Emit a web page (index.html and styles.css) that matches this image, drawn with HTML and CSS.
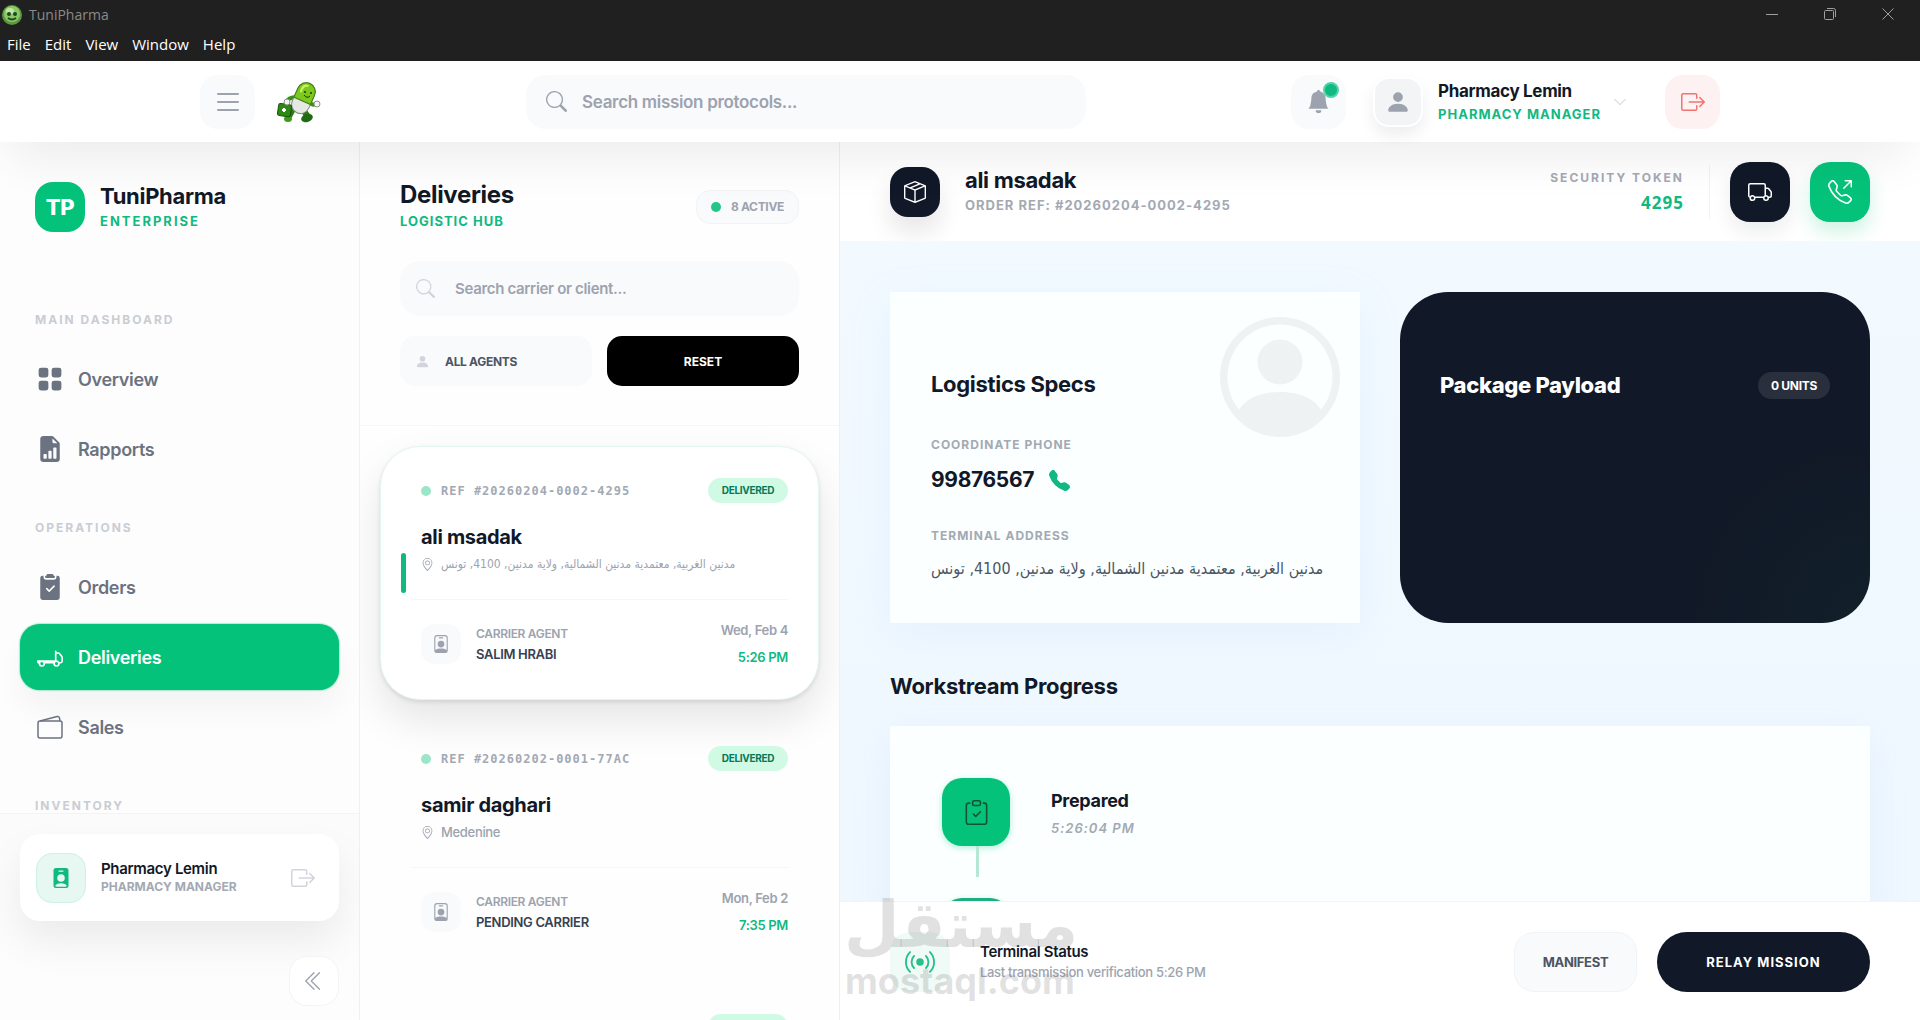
FILE: index.html
```html
<!DOCTYPE html>
<html lang="en">
<head>
  <meta charset="UTF-8" />
  <meta name="viewport" content="width=device-width, initial-scale=1.0" />
  <title>TuniPharma</title>
  <link rel="stylesheet" href="styles.css">
</head>
<body>
  <!-- Icon set -->
  <svg class="sprite" aria-hidden="true">
    <symbol id="i-list" viewBox="0 0 16 16"><path d="M2.5 12a.5.5 0 0 1 .5-.5h10a.5.5 0 0 1 0 1H3a.5.5 0 0 1-.5-.5m0-4a.5.5 0 0 1 .5-.5h10a.5.5 0 0 1 0 1H3a.5.5 0 0 1-.5-.5m0-4a.5.5 0 0 1 .5-.5h10a.5.5 0 0 1 0 1H3a.5.5 0 0 1-.5-.5"/></symbol>
    <symbol id="i-search" viewBox="0 0 16 16"><path d="M11.742 10.344a6.5 6.5 0 1 0-1.397 1.398h-.001q.044.06.098.115l3.85 3.85a1 1 0 0 0 1.415-1.414l-3.85-3.85a1 1 0 0 0-.115-.1zM12 6.5a5.5 5.5 0 1 1-11 0 5.5 5.5 0 0 1 11 0"/></symbol>
    <symbol id="i-bell" viewBox="0 0 16 16"><path d="M8 16a2 2 0 0 0 2-2H6a2 2 0 0 0 2 2m.995-14.901a1 1 0 1 0-1.99 0A5 5 0 0 0 3 6c0 1.098-.5 6-2 7h14c-1.5-1-2-5.902-2-7 0-2.42-1.72-4.44-4.005-4.901"/></symbol>
    <symbol id="i-person" viewBox="0 0 16 16"><path d="M3 14s-1 0-1-1 1-4 6-4 6 3 6 4-1 1-1 1zm5-6a3 3 0 1 0 0-6 3 3 0 0 0 0 6"/></symbol>
    <symbol id="i-chevron" viewBox="0 0 16 16"><path d="M1.646 4.646a.5.5 0 0 1 .708 0L8 10.293l5.646-5.647a.5.5 0 0 1 .708.708l-6 6a.5.5 0 0 1-.708 0l-6-6a.5.5 0 0 1 0-.708"/></symbol>
    <symbol id="i-exit" viewBox="0 0 16 16"><path d="M10 12.5a.5.5 0 0 1-.5.5h-8a.5.5 0 0 1-.5-.5v-9a.5.5 0 0 1 .5-.5h8a.5.5 0 0 1 .5.5v2a.5.5 0 0 0 1 0v-2A1.5 1.5 0 0 0 9.5 2h-8A1.5 1.5 0 0 0 0 3.5v9A1.5 1.5 0 0 0 1.5 14h8a1.5 1.5 0 0 0 1.5-1.5v-2a.5.5 0 0 0-1 0z"/><path d="M15.854 8.354a.5.5 0 0 0 0-.708l-3-3a.5.5 0 0 0-.708.708L14.293 7.5H5.5a.5.5 0 0 0 0 1h8.793l-2.147 2.146a.5.5 0 0 0 .708.708z"/></symbol>
    <symbol id="i-grid" viewBox="0 0 16 16"><path d="M1 2.5A1.5 1.5 0 0 1 2.5 1h3A1.5 1.5 0 0 1 7 2.500v3A1.500 1.500 0 0 1 5.500 7h-3A1.500 1.500 0 0 1 1 5.500zm8 0A1.500 1.500 0 0 1 10.500 1h3A1.500 1.500 0 0 1 15 2.500v3A1.500 1.500 0 0 1 13.500 7h-3A1.500 1.500 0 0 1 9 5.500zm-8 8A1.500 1.500 0 0 1 2.500 9h3A1.500 1.500 0 0 1 7 10.500v3A1.500 1.500 0 0 1 5.500 15h-3A1.500 1.500 0 0 1 1 13.500zm8 0A1.500 1.500 0 0 1 10.500 9h3a1.500 1.500 0 0 1 1.500 1.500v3a1.500 1.500 0 0 1-1.500 1.500h-3A1.500 1.500 0 0 1 9 13.500z"/></symbol>
    <symbol id="i-report" viewBox="0 0 16 16"><path d="M9.293 0H4a2 2 0 0 0-2 2v12a2 2 0 0 0 2 2h8a2 2 0 0 0 2-2V4.707A1 1 0 0 0 13.707 4L10 .293A1 1 0 0 0 9.293 0M9.500 3.500v-2l3 3h-2a1 1 0 0 1-1-1m.5 10v-6a.5.5 0 0 1 .5-.5h1a.5.5 0 0 1 .5.5v6a.5.5 0 0 1-.5.5h-1a.5.5 0 0 1-.5-.5m-2.500.5a.5.5 0 0 1-.5-.5v-4a.5.5 0 0 1 .5-.5h1a.5.5 0 0 1 .5.5v4a.5.5 0 0 1-.5.5zm-3 0a.5.5 0 0 1-.5-.5v-2a.5.5 0 0 1 .5-.5h1a.5.5 0 0 1 .5.5v2a.5.5 0 0 1-.5.5z"/></symbol>
    <symbol id="i-orders" viewBox="0 0 16 16"><path d="M10 .5a.5.5 0 0 0-.5-.5h-3a.5.5 0 0 0-.5.5.5.5 0 0 1-.5.5.5.5 0 0 0-.5.5V2a.5.5 0 0 0 .5.5h5A.5.5 0 0 0 11 2v-.5a.5.5 0 0 0-.5-.5.5.5 0 0 1-.5-.5"/><path d="M4.085 1H3.500A1.500 1.500 0 0 0 2 2.500v12A1.500 1.500 0 0 0 3.500 16h9a1.500 1.500 0 0 0 1.500-1.500v-12A1.500 1.500 0 0 0 12.500 1h-.585q.084.236.085.5V2a1.500 1.500 0 0 1-1.500 1.500h-5A1.500 1.500 0 0 1 4 2v-.5q.001-.264.085-.5m6.769 6.854-3 3a.5.5 0 0 1-.708 0l-1.500-1.500a.5.5 0 1 1 .708-.708L7.500 9.793l2.646-2.647a.5.5 0 0 1 .708.708"/></symbol>
    <symbol id="i-flatbed" viewBox="0 0 16 16"><path d="M11.500 4a.5.5 0 0 1 .5.5V5h1.020a1.500 1.500 0 0 1 1.170.563l1.481 1.850a1.500 1.500 0 0 1 .329.938V10.500a1.500 1.500 0 0 1-1.500 1.500H14a2 2 0 1 1-4 0H5a2 2 0 1 1-4 0 1 1 0 0 1-1-1v-1h11V4.500a.5.5 0 0 1 .5-.5M3 11a1 1 0 1 0 0 2 1 1 0 0 0 0-2m9 0a1 1 0 1 0 0 2 1 1 0 0 0 0-2m1.732 0h.768a.5.5 0 0 0 .5-.5V8.350a.5.5 0 0 0-.11-.312l-1.480-1.850A.5.5 0 0 0 13.020 6H12v4a2 2 0 0 1 1.732 1"/></symbol>
    <symbol id="i-wallet" viewBox="0 0 26 26" fill="none" stroke="currentColor" stroke-width="1.5" stroke-linejoin="round"><rect x="1" y="7" width="24" height="17" rx="2"/><path d="M3 7 20 2.500q2-.5 2.500 1.500l.5 3"/></symbol>
    <symbol id="i-badge-fill" viewBox="0 0 16 16"><path fill-rule="evenodd" d="M4 0h8a2 2 0 0 1 2 2v12a2 2 0 0 1-2 2H4a2 2 0 0 1-2-2V2a2 2 0 0 1 2-2m2.500 2a.5.5 0 0 0 0 1h3a.5.5 0 0 0 0-1zM8 5a3 3 0 1 0 0 6 3 3 0 0 0 0-6M3.500 13.800V14a1 1 0 0 0 1 1h7a1 1 0 0 0 1-1v-.2C11.500 12.800 10 12.200 8 12.200s-3.500.6-4.500 1.600"/></symbol>
    <symbol id="i-badge" viewBox="0 0 16 16"><path d="M6.500 2a.5.5 0 0 0 0 1h3a.5.5 0 0 0 0-1zM11 8a3 3 0 1 1-6 0 3 3 0 0 1 6 0"/><path d="M4.500 0A2.500 2.500 0 0 0 2 2.500V14a2 2 0 0 0 2 2h8a2 2 0 0 0 2-2V2.500A2.500 2.500 0 0 0 11.500 0zM3 2.500A1.500 1.500 0 0 1 4.500 1h7A1.500 1.500 0 0 1 13 2.500v10.795a4.200 4.200 0 0 0-.776-.492C11.392 12.387 10.063 12 8 12s-3.392.387-4.224.803a4.200 4.200 0 0 0-.776.492z"/></symbol>
    <symbol id="i-collapse" viewBox="0 0 16 16" fill="none" stroke="currentColor" stroke-linecap="round" stroke-linejoin="round"><path d="M8 2 2 8l6 6M12 2 6 8l6 6"/></symbol>
    <symbol id="i-geo" viewBox="0 0 16 16"><path d="M12.166 8.940c-.524 1.062-1.234 2.120-1.960 3.070A32 32 0 0 1 8 14.580a32 32 0 0 1-2.206-2.570c-.726-.95-1.436-2.008-1.960-3.070C3.304 7.867 3 6.862 3 6a5 5 0 0 1 10 0c0 .862-.305 1.867-.834 2.940M8 16s6-5.686 6-10A6 6 0 0 0 2 6c0 4.314 6 10 6 10"/><path d="M8 8a2 2 0 1 1 0-4 2 2 0 0 1 0 4m0 1a3 3 0 1 0 0-6 3 3 0 0 0 0 6"/></symbol>
    <symbol id="i-box" viewBox="0 0 16 16"><path d="M8.186 1.113a.5.5 0 0 0-.372 0L1.846 3.500l2.404.961L10.404 2zm3.564 1.426L5.596 5 8 5.961 14.154 3.500zm3.250 1.700-6.500 2.600v7.922l6.500-2.600V4.240zM7.500 14.762V6.838L1 4.239v7.923zM7.443.184a1.500 1.500 0 0 1 1.114 0l7.129 2.852A.5.5 0 0 1 16 3.500v8.662a1 1 0 0 1-.629.928l-7.185 2.874a.5.5 0 0 1-.372 0L.630 13.090a1 1 0 0 1-.630-.928V3.500a.5.5 0 0 1 .314-.464z"/></symbol>
    <symbol id="i-truck" viewBox="0 0 16 16"><path d="M0 3.500A1.500 1.500 0 0 1 1.500 2h9A1.500 1.500 0 0 1 12 3.500V5h1.020a1.500 1.500 0 0 1 1.170.563l1.481 1.850a1.500 1.500 0 0 1 .329.938V10.500a1.500 1.500 0 0 1-1.500 1.500H14a2 2 0 1 1-4 0H5a2 2 0 1 1-3.998-.085A1.500 1.500 0 0 1 0 10.500zm1.294 7.456A2 2 0 0 1 4.732 11h5.536a2 2 0 0 1 .732-.732V3.500a.5.5 0 0 0-.5-.5h-9a.5.5 0 0 0-.5.5v7a.5.5 0 0 0 .294.456M12 10a2 2 0 0 1 1.732 1h.768a.5.5 0 0 0 .5-.5V8.350a.5.5 0 0 0-.11-.312l-1.480-1.850A.5.5 0 0 0 13.020 6H12zm-9 1a1 1 0 1 0 0 2 1 1 0 0 0 0-2m9 0a1 1 0 1 0 0 2 1 1 0 0 0 0-2"/></symbol>
    <symbol id="i-call-out" viewBox="0 0 16 16"><path d="M3.654 1.328a.678.678 0 0 0-1.015-.063L1.605 2.300c-.483.484-.661 1.169-.45 1.770a17.600 17.600 0 0 0 4.168 6.608 17.600 17.600 0 0 0 6.608 4.168c.601.211 1.286.033 1.770-.450l1.034-1.034a.678.678 0 0 0-.063-1.015l-2.307-1.794a.680.680 0 0 0-.580-.122l-2.190.547a1.750 1.750 0 0 1-1.657-.459L5.482 8.062a1.750 1.750 0 0 1-.460-1.657l.548-2.190a.680.680 0 0 0-.122-.580zM1.884.511a1.745 1.745 0 0 1 2.612.163L6.290 2.980c.329.423.445.974.315 1.494l-.547 2.190a.680.680 0 0 0 .178.643l2.457 2.457a.680.680 0 0 0 .644.178l2.189-.547a1.750 1.750 0 0 1 1.494.315l2.306 1.794c.829.645.905 1.870.163 2.611l-1.034 1.034c-.740.740-1.846 1.065-2.877.702a18.600 18.600 0 0 1-7.010-4.420 18.600 18.600 0 0 1-4.420-7.009c-.362-1.030-.037-2.137.703-2.877zM11 .5a.5.5 0 0 1 .5-.5h4a.5.5 0 0 1 .5.5v4a.5.5 0 0 1-1 0V1.707l-4.146 4.147a.5.5 0 0 1-.708-.708L14.293 1H11.500a.5.5 0 0 1-.5-.5"/></symbol>
    <symbol id="i-phone" viewBox="0 0 16 16"><path d="M1.885.511a1.745 1.745 0 0 1 2.610.163L6.290 2.980c.329.423.445.974.315 1.494l-.547 2.190a.680.680 0 0 0 .178.643l2.457 2.457a.680.680 0 0 0 .644.178l2.189-.547a1.750 1.750 0 0 1 1.494.315l2.306 1.794c.829.645.905 1.870.163 2.611l-1.034 1.034c-.740.740-1.846 1.065-2.877.702a18.600 18.600 0 0 1-7.010-4.420 18.600 18.600 0 0 1-4.420-7.009c-.362-1.030-.037-2.137.703-2.877z"/></symbol>
    <symbol id="i-user-circle" viewBox="0 0 16 16"><path d="M11 6a3 3 0 1 1-6 0 3 3 0 0 1 6 0"/><path fill-rule="evenodd" d="M0 8a8 8 0 1 1 16 0A8 8 0 0 1 0 8m8-7a7 7 0 0 0-5.468 11.370C3.242 11.226 4.805 10 8 10s4.757 1.225 5.468 2.370A7 7 0 0 0 8 1"/></symbol>
    <symbol id="i-clipboard" viewBox="0 0 16 16"><path fill-rule="evenodd" d="M10.854 7.146a.5.5 0 0 1 0 .708l-3 3a.5.5 0 0 1-.708 0l-1.500-1.500a.5.5 0 1 1 .708-.708L7.500 9.793l2.646-2.647a.5.5 0 0 1 .708 0"/><path d="M4 1.500H3a2 2 0 0 0-2 2V14a2 2 0 0 0 2 2h10a2 2 0 0 0 2-2V3.500a2 2 0 0 0-2-2h-1v1h1a1 1 0 0 1 1 1V14a1 1 0 0 1-1 1H3a1 1 0 0 1-1-1V3.500a1 1 0 0 1 1-1h1z"/><path d="M9.500 1a.5.5 0 0 1 .5.5v1a.5.5 0 0 1-.5.5h-3a.5.5 0 0 1-.5-.5v-1a.5.5 0 0 1 .5-.5zm-3-1A1.500 1.500 0 0 0 5 1.500v1A1.500 1.500 0 0 0 6.500 4h3A1.500 1.500 0 0 0 11 2.500v-1A1.500 1.500 0 0 0 9.500 0z"/></symbol>
    <symbol id="i-broadcast" viewBox="0 0 16 16"><path d="M3.050 3.050a7 7 0 0 0 0 9.900.5.5 0 0 1-.707.707 8 8 0 0 1 0-11.314.5.5 0 0 1 .707.707m2.122 2.122a4 4 0 0 0 0 5.656.5.5 0 1 1-.708.708 5 5 0 0 1 0-7.072.5.5 0 0 1 .708.708m5.656-.708a.5.5 0 0 1 .708 0 5 5 0 0 1 0 7.072.5.5 0 1 1-.708-.708 4 4 0 0 0 0-5.656.5.5 0 0 1 0-.708m2.122-2.120a.5.5 0 0 1 .707 0 8 8 0 0 1 0 11.313.5.5 0 0 1-.707-.707 7 7 0 0 0 0-9.900.5.5 0 0 1 0-.707zM10 8a2 2 0 1 1-4 0 2 2 0 0 1 4 0"/></symbol>
  </svg>

  <!-- Window frame -->
  <div class="window-bar">
    <div class="title-row">
      <svg class="app-icon" viewBox="0 0 20 20"><ellipse cx="10" cy="10" rx="10" ry="10" fill="#5a9a3c"/><ellipse cx="10" cy="9" rx="8" ry="8" fill="#8cc868"/><ellipse cx="8" cy="6" rx="4" ry="3" fill="#c3e6a6"/><circle cx="7" cy="9" r="2" fill="#1c4a1c"/><circle cx="13" cy="9" r="2" fill="#1c4a1c"/><path d="M6 13q4 3 8 0" stroke="#1c4a1c" stroke-width="2" fill="none"/></svg>
      <span class="app-name">TuniPharma</span>
      <div class="window-controls">
        <button aria-label="Minimize"><svg viewBox="0 0 12 12"><path d="M0 6.500h12"/></svg></button>
        <button aria-label="Restore"><svg viewBox="0 0 12 12"><rect x=".5" y="2.500" width="9" height="9" rx="1"/><path d="M3 .5h6.500a2 2 0 0 1 2 2V9"/></svg></button>
        <button aria-label="Close"><svg viewBox="0 0 12 12"><path d="m.5.5 11 11m0-11-11 11"/></svg></button>
      </div>
    </div>
    <div class="menu-row">
      <button>File</button>
      <button>Edit</button>
      <button>View</button>
      <button>Window</button>
      <button>Help</button>
    </div>
  </div>

  <header class="topbar">
    <div class="topbar-inner">
      <div class="topbar-left">
        <button class="square-btn" aria-label="Menu"><svg class="icon icon-menu"><use href="#i-list"/></svg></button>
        <svg class="mascot" viewBox="0 0 44 42">
          <path d="M16 28l-5 9M27 30l4 6" stroke="#2c7a10" stroke-width="6" stroke-linecap="round"/>
          <ellipse cx="11" cy="38" rx="4" ry="3" fill="#3f9a1a"/>
          <ellipse cx="30" cy="37" rx="6" ry="4" fill="#1f6a12" transform="rotate(-20 30 37)"/>
          <path d="M20 16q-9 0-11 6M31 20q4 5 7 3" stroke="#3a8f18" stroke-width="4" fill="none" stroke-linecap="round"/>
          <g transform="rotate(24 26 18)">
            <rect x="17" y="1" width="18" height="32" rx="9" fill="#e6e8e4" stroke="#7d8a78"/>
            <path d="M17 20V10a9 9 0 0 1 18 0v10z" fill="#7cc81c" stroke="#3c7c10"/>
            <path d="M21 12V9a5 5 0 0 1 4-5" stroke="#c9f06c" stroke-width="2" fill="none" stroke-linecap="round"/>
          </g>
          <circle cx="28" cy="11" r="1" fill="#123a08"/><circle cx="34" cy="12" r="1" fill="#123a08"/>
          <path d="M27 14q3 4 6 1" stroke="#123a08" fill="none"/>
          <rect x="1" y="23" width="13" height="12" rx="2" fill="#2e8a14" stroke="#185408" transform="rotate(8 7 29)"/>
          <path d="M7 27v4M5 29h4" stroke="#fff" stroke-width="2"/>
          <circle cx="10" cy="21" r="3" fill="#f4f4f4" stroke="#8a9484"/><circle cx="40" cy="23" r="3" fill="#f4f4f4" stroke="#8a9484"/>
        </svg>
      </div>
      <label class="top-search">
        <svg class="icon"><use href="#i-search"/></svg>
        <input type="text" placeholder="Search mission protocols..." aria-label="Search mission protocols" />
      </label>
      <div class="topbar-right">
        <button class="square-btn bell" aria-label="Notifications"><svg class="icon icon-bell"><use href="#i-bell"/></svg><span class="bell-dot"></span></button>
        <button class="profile">
          <span class="profile-pic"><svg class="icon"><use href="#i-person"/></svg></span>
          <span class="profile-text">
            <strong>Pharmacy Lemin</strong>
            <small>PHARMACY MANAGER</small>
          </span>
          <svg class="icon icon-chevron"><use href="#i-chevron"/></svg>
        </button>
        <button class="square-btn exit" aria-label="Log out"><svg class="icon"><use href="#i-exit"/></svg></button>
      </div>
    </div>
  </header>

  <div class="layout">
    <aside class="sidebar">
      <div class="brand">
        <span class="brand-logo">TP</span>
        <div>
          <div class="brand-name">TuniPharma</div>
          <div class="brand-sub">ENTERPRISE</div>
        </div>
      </div>
      <nav class="side-nav">
        <section>
          <h2>MAIN DASHBOARD</h2>
          <a href="#"><svg class="icon"><use href="#i-grid"/></svg>Overview</a>
          <a href="#"><svg class="icon"><use href="#i-report"/></svg>Rapports</a>
        </section>
        <section>
          <h2>OPERATIONS</h2>
          <a href="#"><svg class="icon"><use href="#i-orders"/></svg>Orders</a>
          <a href="#" class="active"><svg class="icon"><use href="#i-flatbed"/></svg>Deliveries</a>
          <a href="#"><svg class="icon"><use href="#i-wallet"/></svg>Sales</a>
        </section>
        <section>
          <h2>INVENTORY</h2>
        </section>
      </nav>
      <div class="side-footer">
        <div class="user-card">
          <span class="user-pic"><svg class="icon"><use href="#i-badge-fill"/></svg></span>
          <div class="user-text">
            <strong>Pharmacy Lemin</strong>
            <small>PHARMACY MANAGER</small>
          </div>
          <button class="user-exit" aria-label="Log out"><svg class="icon"><use href="#i-exit"/></svg></button>
        </div>
        <button class="collapse" aria-label="Collapse sidebar"><svg class="icon"><use href="#i-collapse"/></svg></button>
      </div>
    </aside>

    <section class="hub">
      <div class="hub-head">
        <div class="hub-title">
          <div>
            <h1>Deliveries</h1>
            <p>LOGISTIC HUB</p>
          </div>
          <span class="active-count"><i class="dot"></i>8 ACTIVE</span>
        </div>
        <label class="hub-search">
          <svg class="icon"><use href="#i-search"/></svg>
          <input type="text" placeholder="Search carrier or client..." aria-label="Search carrier or client" />
        </label>
        <div class="hub-filters">
          <label class="agent-filter">
            <svg class="icon"><use href="#i-person"/></svg>
            <select aria-label="Agent"><option>ALL AGENTS</option></select>
          </label>
          <button class="reset">RESET</button>
        </div>
      </div>
      <div class="hub-list">
        <article class="delivery selected">
          <div class="delivery-top"><i class="dot"></i><span class="ref">REF #20260204-0002-4295</span><span class="state">DELIVERED</span></div>
          <h3>ali msadak</h3>
          <p class="place"><svg class="icon"><use href="#i-geo"/></svg><span class="place-text" lang="ar">مدنين الغربية, معتمدية مدنين الشمالية, ولاية مدنين, 4100, تونس</span></p>
          <div class="delivery-foot">
            <span class="agent-pic"><svg class="icon"><use href="#i-badge"/></svg></span>
            <div class="agent"><small>CARRIER AGENT</small><strong>SALIM HRABI</strong></div>
            <div class="when"><span>Wed, Feb 4</span><strong>5:26 PM</strong></div>
          </div>
        </article>
        <article class="delivery">
          <div class="delivery-top"><i class="dot"></i><span class="ref">REF #20260202-0001-77AC</span><span class="state">DELIVERED</span></div>
          <h3>samir daghari</h3>
          <p class="place"><svg class="icon"><use href="#i-geo"/></svg><span class="place-text">Medenine</span></p>
          <div class="delivery-foot">
            <span class="agent-pic"><svg class="icon"><use href="#i-badge"/></svg></span>
            <div class="agent"><small>CARRIER AGENT</small><strong>PENDING CARRIER</strong></div>
            <div class="when"><span>Mon, Feb 2</span><strong>7:35 PM</strong></div>
          </div>
        </article>
        <article class="delivery">
          <div class="delivery-top"><span class="state"></span></div>
        </article>
      </div>
    </section>

    <main class="detail">
      <div class="detail-head">
        <span class="order-pic"><svg class="icon"><use href="#i-box"/></svg></span>
        <div class="order-name">
          <h2>ali msadak</h2>
          <p>ORDER REF: #20260204-0002-4295</p>
        </div>
        <div class="token">
          <span>SECURITY TOKEN</span>
          <strong>4295</strong>
        </div>
        <button class="round-btn dark" aria-label="Track"><svg class="icon"><use href="#i-truck"/></svg></button>
        <button class="round-btn green" aria-label="Call"><svg class="icon"><use href="#i-call-out"/></svg></button>
      </div>

      <div class="detail-body">
        <div class="detail-grid">
          <section class="specs">
            <svg class="specs-mark"><use href="#i-user-circle"/></svg>
            <h2>Logistics Specs</h2>
            <h4>COORDINATE PHONE</h4>
            <p class="phone">99876567 <svg class="icon"><use href="#i-phone"/></svg></p>
            <h4>TERMINAL ADDRESS</h4>
            <p class="address" lang="ar">مدنين الغربية, معتمدية مدنين الشمالية, ولاية مدنين, 4100, تونس</p>
          </section>
          <section class="payload">
            <h2>Package Payload</h2>
            <span class="units">0 UNITS</span>
          </section>
        </div>
        <h2 class="progress-title">Workstream Progress</h2>
        <section class="progress">
          <div class="step">
            <div class="step-icon"><svg class="icon"><use href="#i-clipboard"/></svg></div>
            <div class="step-text"><strong>Prepared</strong><em>5:26:04 PM</em></div>
          </div>
          <div class="step">
            <div class="step-icon next"></div>
          </div>
        </section>
      </div>

      <footer class="detail-foot">
        <span class="signal"><svg class="icon"><use href="#i-broadcast"/></svg></span>
        <div class="signal-text">
          <strong>Terminal Status</strong>
          <small>Last transmission verification 5:26 PM</small>
        </div>
        <button class="manifest">MANIFEST</button>
        <button class="relay">RELAY MISSION</button>
      </footer>

      <!-- Watermark -->
      <div class="watermark" aria-hidden="true">
        <span class="watermark-ar" lang="ar">مستقل</span>
        <span class="watermark-en">mostaql.com</span>
      </div>
    </main>
  </div>
</body>
</html>
```

FILE: styles.css
```css
* {
  box-sizing: border-box;
}
body {
  margin: 0;
  height: 100vh;
  display: flex;
  flex-direction: column;
  overflow: hidden;
  font-family: Inter, "DejaVu Sans", sans-serif;
  letter-spacing: -0.02em;
  background: #fdfdfd;
  color: #111827;
}
h1, h2, h3, h4, p {
  margin: 0;
}
button, input, select {
  font: inherit;
  letter-spacing: inherit;
  color: inherit;
  border: none;
  background: none;
  padding: 0;
}
button {
  cursor: pointer;
}
a {
  text-decoration: none;
}
.sprite {
  position: absolute;
  width: 0;
  height: 0;
}
.icon {
  width: 22px;
  height: 22px;
  fill: currentColor;
  flex-shrink: 0;
}
.dot {
  width: 10px;
  height: 10px;
  border-radius: 50%;
  background: #22c689;
}

/* window frame */
.window-bar {
  background: #202020;
  color: #fff;
  font-family: "Open Sans", sans-serif;
  letter-spacing: normal;
  height: 61px;
  flex-shrink: 0;
}
.title-row {
  display: flex;
  align-items: center;
  height: 29px;
  padding-left: 2px;
  font-size: 14px;
  color: #8a8a8a;
}
.app-icon {
  width: 20px;
  height: 20px;
  margin-right: 7px;
}
.window-controls {
  display: flex;
  margin-left: auto;
  padding-right: 3px;
}
.window-controls button {
  width: 58px;
  height: 28px;
}
.window-controls svg {
  width: 12px;
  height: 12px;
  fill: none;
  stroke: #a0a0a0;
}
.menu-row {
  display: flex;
  gap: 14px;
  padding-left: 7px;
  line-height: 31px;
  font-size: 15px;
}

/* top bar */
.topbar {
  position: relative;
  z-index: 10;
  background: #fff;
  flex-shrink: 0;
  box-shadow: 0 25px 50px -12px rgba(0,0,0,0.08);
}
.topbar-inner {
  display: flex;
  align-items: center;
  justify-content: space-between;
  max-width: 1600px;
  height: 81px;
  margin: 0 auto;
  padding: 0 40px;
}
.topbar-left, .topbar-right, .profile {
  display: flex;
  align-items: center;
}
.topbar-left {
  gap: 22px;
}
.square-btn {
  position: relative;
  display: flex;
  align-items: center;
  justify-content: center;
  width: 55px;
  height: 54px;
  border-radius: 18px;
  background: #f9fafc;
  color: #9ca3af;
}
.icon-menu {
  width: 32px;
  height: 32px;
}
.mascot {
  width: 44px;
  height: 42px;
}
.top-search {
  display: flex;
  align-items: center;
  gap: 15px;
  width: 560px;
  height: 54px;
  padding: 0 20px;
  border-radius: 20px;
  background: #f9fafc;
  color: #9ca3af;
}
.top-search .icon {
  width: 21px;
  height: 21px;
}
input {
  flex: 1;
  min-width: 0;
  outline: none;
  font-size: 16px;
  font-weight: 600;
}
input::placeholder {
  color: #9ca3af;
  opacity: 1;
}
.top-search input {
  font-size: 17px;
}
.bell .icon {
  width: 23px;
  height: 23px;
}
.bell-dot {
  position: absolute;
  top: 7px;
  right: 7px;
  width: 16px;
  height: 16px;
  border-radius: 50%;
  background: #10b981;
  border: 2px solid #4fd5a5;
}
.profile {
  margin: 0 38px 0 27px;
  text-align: left;
}
.profile-pic {
  display: flex;
  align-items: center;
  justify-content: center;
  width: 50px;
  height: 50px;
  border: 2px solid #fff;
  border-radius: 16px;
  background: #f3f4f6;
  box-shadow: 0 8px 16px rgba(0,0,0,0.07);
  color: #9ca3af;
}
.profile-pic .icon {
  width: 26px;
  height: 26px;
}
.profile-text {
  display: flex;
  flex-direction: column;
  gap: 2px;
  margin: 0 12px 0 15px;
}
.profile-text strong {
  font-size: 17px;
  line-height: 22px;
}
.profile-text small {
  font-size: 13px;
  line-height: 20px;
  font-weight: 700;
  letter-spacing: 1px;
  color: #10b981;
}
.icon-chevron {
  width: 14px;
  height: 14px;
  color: #d1d5db;
}
.exit {
  background: #fef1f1;
  color: #f0736f;
}
.exit .icon {
  width: 24px;
  height: 24px;
}

/* three columns */
.layout {
  display: flex;
  flex: 1;
  min-height: 0;
}
.sidebar {
  display: flex;
  flex-direction: column;
  width: 360px;
  flex-shrink: 0;
  background: #fdfdfd;
  border-right: 1px solid #f0f0f1;
}
.brand {
  display: flex;
  align-items: center;
  gap: 15px;
  padding: 40px 35px;
}
.brand-logo {
  width: 50px;
  line-height: 50px;
  border-radius: 18px;
  background: #05c27a;
  color: #fff;
  font-size: 22px;
  font-weight: 800;
  text-align: center;
}
.brand-name {
  font-size: 22px;
  line-height: 28px;
  font-weight: 700;
}
.brand-sub {
  font-size: 13px;
  line-height: 22px;
  font-weight: 700;
  letter-spacing: 2px;
  color: #10b981;
}
.side-nav {
  display: flex;
  flex-direction: column;
  gap: 38px;
  flex: 1;
  min-height: 0;
  overflow: hidden;
  padding: 40px 20px 0;
}
.side-nav section {
  display: flex;
  flex-direction: column;
  gap: 4px;
}
.side-nav h2 {
  margin: 0 15px 14px;
  font-size: 12px;
  line-height: 16px;
  font-weight: 700;
  letter-spacing: 2px;
  color: #c9cdd3;
}
.side-nav a {
  display: flex;
  align-items: center;
  gap: 15px;
  height: 66px;
  padding: 0 17px;
  border-radius: 20px;
  color: #6b7280;
  font-size: 18px;
  font-weight: 600;
}
.side-nav .icon {
  width: 26px;
  height: 26px;
}
.side-nav a.active {
  background: #05c27a;
  color: #fff;
  box-shadow: 0 0 2px #05c27a, 0 20px 30px rgba(0,0,0,0.04);
}
.side-footer {
  display: flex;
  flex-direction: column;
  gap: 35px;
  padding: 20px 20px 14px;
  border-top: 1px solid #f3f4f5;
  background: linear-gradient(#fbfbfb, #fdfdfd);
}
.user-card {
  display: flex;
  align-items: center;
  gap: 15px;
  height: 87px;
  padding: 0 24px 0 16px;
  border-radius: 20px;
  background: #fff;
  box-shadow: 0 20px 40px rgba(0,0,0,0.07);
}
.user-pic {
  display: flex;
  align-items: center;
  justify-content: center;
  width: 50px;
  height: 50px;
  border: 1px solid #cdf1e3;
  border-radius: 16px;
  background: #e6f8f1;
  color: #10b981;
}
.user-pic .icon {
  width: 20px;
  height: 20px;
}
.user-text {
  flex: 1;
}
.user-text strong, .user-text small {
  display: block;
  line-height: 18px;
}
.user-text strong {
  font-size: 15px;
  font-weight: 600;
}
.user-text small {
  font-size: 12px;
  font-weight: 700;
  letter-spacing: 0;
  color: #a3a9b3;
}
.user-exit {
  display: flex;
  color: #d1d5db;
}
.user-exit .icon {
  width: 24px;
  height: 24px;
}
.collapse {
  display: flex;
  align-items: center;
  justify-content: center;
  align-self: flex-end;
  width: 50px;
  height: 50px;
  border: 1px solid #f3f4f6;
  border-radius: 18px;
  background: #fff;
  color: #9ca3af;
}

/* deliveries list */
.hub {
  display: flex;
  flex-direction: column;
  width: 480px;
  flex-shrink: 0;
  background: #fefefe;
  border-right: 1px solid #f0f0f3;
}
.hub-head {
  padding: 40px 40px 39px;
  border-bottom: 1px solid #f6f6f7;
}
.hub-title {
  display: flex;
  align-items: center;
  justify-content: space-between;
  margin-bottom: 30px;
}
.hub-title h1 {
  margin-bottom: 4px;
  font-size: 24px;
  line-height: 26px;
}
.hub-title p {
  font-size: 13px;
  line-height: 19px;
  font-weight: 700;
  letter-spacing: 1px;
  color: #10b981;
}
.active-count {
  display: flex;
  align-items: center;
  gap: 10px;
  height: 34px;
  padding: 0 14px;
  border: 1px solid #f1f3f5;
  border-radius: 14px;
  background: #f9fafc;
  color: #9ca3af;
  font-size: 12px;
  font-weight: 700;
}
.hub-search {
  display: flex;
  align-items: center;
  gap: 20px;
  height: 55px;
  margin-bottom: 20px;
  padding: 0 16px;
  border-radius: 20px;
  background: #f9fafc;
}
.hub-search .icon {
  width: 19px;
  height: 19px;
  color: #d1d5db;
}
.hub-search input {
  font-size: 15px;
}
.hub-filters {
  display: grid;
  grid-template-columns: 1fr 1fr;
  gap: 15px;
}
.agent-filter, .reset {
  height: 50px;
  border-radius: 15px;
  font-size: 12px;
  font-weight: 700;
}
.agent-filter {
  display: flex;
  align-items: center;
  gap: 15px;
  padding: 0 15px;
  background: #f9fafc;
  color: #4b5563;
}
.agent-filter .icon {
  width: 15px;
  height: 15px;
  color: #d1d5db;
}
.agent-filter select {
  flex: 1;
  min-width: 0;
  appearance: none;
}
.reset {
  background: #000;
  color: #fff;
  letter-spacing: 0;
}
.hub-list {
  display: flex;
  flex-direction: column;
  gap: 14px;
  flex: 1;
  min-height: 0;
  overflow: hidden;
  padding: 20px 20px 0;
}
.delivery {
  position: relative;
  flex-shrink: 0;
  min-height: 254px;
  padding: 31px 30px 32px 40px;
  border: 1px solid transparent;
  border-radius: 40px;
}
.delivery.selected {
  background: #fff;
  border-color: #e3f6ef;
  box-shadow: 0 20px 40px rgba(0,0,0,0.1), 0 2px 4px rgba(0,0,0,0.1);
}
.delivery.selected::before {
  content: "";
  position: absolute;
  left: 20px;
  top: 50%;
  width: 5px;
  height: 40px;
  transform: translateY(-50%);
  border-radius: 3px;
  background: #10b981;
}
.delivery-top {
  display: flex;
  align-items: center;
  gap: 10px;
}
.delivery-top .dot {
  background: #9be5c9;
}
.ref {
  font-family: "DejaVu Sans Mono", monospace;
  font-size: 12px;
  font-weight: 700;
  letter-spacing: 1px;
  color: #a3a9b3;
}
.state {
  margin-left: auto;
  width: 80px;
  height: 25px;
  line-height: 25px;
  border-radius: 13px;
  background: #d1fae5;
  color: #047857;
  font-size: 10px;
  font-weight: 700;
  text-align: center;
}
.delivery h3 {
  margin-top: 21px;
  font-size: 20px;
  line-height: 26px;
}
.place {
  display: flex;
  align-items: center;
  gap: 7px;
  height: 20px;
  margin-top: 4px;
  font-size: 13px;
  font-weight: 500;
  color: #9ca3af;
}
.place .icon {
  width: 13px;
  height: 13px;
}
.place-text {
  white-space: nowrap;
}
.place-text:lang(ar) {
  font-family: "DejaVu Sans Condensed", "DejaVu Sans", sans-serif;
  font-size: 12px;
}
.delivery-foot {
  display: flex;
  align-items: center;
  margin: 25px 0 0 -9px;
  padding: 20px 0 0 9px;
  border-top: 1px solid #f6f6f7;
}
.agent-pic {
  display: flex;
  align-items: center;
  justify-content: center;
  width: 40px;
  height: 40px;
  margin-right: 15px;
  border-radius: 14px;
  background: #f9fafc;
  color: #9ca3af;
}
.agent-pic .icon {
  width: 18px;
  height: 18px;
}
.agent small, .agent strong {
  display: block;
  line-height: 20px;
}
.agent small {
  font-size: 12px;
  font-weight: 600;
  color: #9ca3af;
}
.agent strong {
  font-size: 13px;
  font-weight: 600;
  color: #374151;
}
.when {
  display: flex;
  flex-direction: column;
  gap: 7px;
  margin-left: auto;
  text-align: right;
  font-size: 13px;
  line-height: 20px;
  font-weight: 600;
  color: #9ca3af;
}
.when strong {
  font-weight: 600;
  color: #10b981;
}

/* mission detail */
.detail {
  position: relative;
  display: flex;
  flex-direction: column;
  flex: 1;
  min-width: 0;
  background: #fff;
}
.detail-head {
  display: flex;
  align-items: center;
  height: 99px;
  flex-shrink: 0;
  padding: 0 50px;
}
.order-pic {
  display: flex;
  align-items: center;
  justify-content: center;
  width: 50px;
  height: 50px;
  margin-right: 25px;
  border-radius: 18px;
  background: #111827;
  color: #fff;
  box-shadow: 0 15px 25px rgba(17,24,39,0.1);
}
.order-name h2 {
  font-size: 22px;
  line-height: 26px;
}
.order-name p {
  font-size: 13px;
  line-height: 24px;
  font-weight: 700;
  letter-spacing: 1px;
  color: #a3a9b3;
}
.token {
  display: flex;
  flex-direction: column;
  margin-left: auto;
  padding: 0 25px 4px 0;
  border-right: 1px solid #f1f2f4;
  text-align: right;
  line-height: 25px;
}
.token span {
  font-size: 12px;
  font-weight: 700;
  letter-spacing: 2px;
  color: #a3a9b3;
}
.token strong {
  font-family: "Noto Sans", sans-serif;
  font-size: 17px;
  letter-spacing: 1px;
  color: #10b981;
}
.round-btn {
  display: flex;
  align-items: center;
  justify-content: center;
  width: 60px;
  height: 60px;
  margin-left: 20px;
  border-radius: 20px;
  color: #fff;
}
.round-btn .icon {
  width: 24px;
  height: 24px;
}
.round-btn.dark {
  background: #111827;
  box-shadow: 0 10px 20px rgba(17,24,39,0.08);
}
.round-btn.green {
  background: #05c27a;
  box-shadow: 0 10px 20px rgba(5,194,122,0.2);
}
.detail-body {
  flex: 1;
  min-height: 0;
  overflow: hidden;
  padding: 51px 50px 0;
  background: linear-gradient(#f2faff, #eff7ff);
}
.detail-grid {
  display: grid;
  grid-template-columns: minmax(0, 1fr) minmax(0, 1fr);
  gap: 40px;
}
.specs, .progress {
  background: #fbffff;
  box-shadow: 0 10px 40px rgba(150,190,240,0.12);
}
.specs {
  position: relative;
  padding: 77px 40px 40px 41px;
}
.specs h2, .payload h2, .progress-title {
  font-size: 22px;
  line-height: 30px;
}
.specs-mark {
  position: absolute;
  top: 25px;
  right: 20px;
  width: 120px;
  height: 120px;
  fill: #eff2f3;
}
.specs h4 {
  margin-top: 38px;
  font-size: 12px;
  line-height: 16px;
  letter-spacing: 1px;
  color: #a3a9b3;
}
.phone {
  display: flex;
  align-items: center;
  gap: 15px;
  margin: 12px 0 -5px;
  font-size: 21px;
  line-height: 30px;
  font-weight: 700;
}
.phone .icon {
  width: 21px;
  height: 21px;
  color: #10b981;
}
.address {
  margin-top: 11px;
  font-family: "DejaVu Sans Condensed", "DejaVu Sans", sans-serif;
  font-size: 16px;
  line-height: 28px;
  font-weight: 500;
  color: #4b5563;
  white-space: nowrap;
}
.payload {
  display: flex;
  align-items: flex-start;
  justify-content: space-between;
  padding: 78px 40px 40px;
  border-radius: 48px;
  background: radial-gradient(circle at 100% 100%, #11202a 0, #111827 200px);
  color: #fff;
}
.payload h2 {
  font-weight: 800;
}
.units {
  width: 72px;
  margin-top: 2px;
  line-height: 27px;
  border-radius: 14px;
  background: #292f3d;
  font-size: 12px;
  font-weight: 700;
  text-align: center;
}
.progress-title {
  margin: 48px 0 25px;
}
.progress {
  height: 600px;
  padding: 52px;
}
.step {
  position: relative;
  display: flex;
  gap: 41px;
  height: 120px;
}
.step:first-child::before {
  content: "";
  position: absolute;
  left: 34px;
  top: 68px;
  width: 3px;
  height: 31px;
  background: #b4e8d5;
}
.step-icon {
  display: flex;
  align-items: center;
  justify-content: center;
  width: 68px;
  height: 68px;
  border-radius: 20px;
  background: #05c27a;
  box-shadow: 0 2px 6px rgba(5,194,122,0.3);
  color: #14532d;
}
.step-icon .icon {
  width: 25px;
  height: 25px;
}
.step-icon.next {
  background: #1fae7f;
}
.step-text {
  display: flex;
  flex-direction: column;
  gap: 1px;
  padding-top: 10px;
}
.step-text strong {
  font-size: 18px;
  line-height: 26px;
}
.step-text em {
  font-size: 13px;
  line-height: 26px;
  font-weight: 600;
  letter-spacing: 1px;
  color: #a3a9b3;
}
.detail-foot {
  display: flex;
  align-items: center;
  flex-shrink: 0;
  padding: 30px 50px 28px;
  border-top: 1px solid #f1f5f8;
}
.signal {
  display: flex;
  align-items: center;
  justify-content: center;
  width: 60px;
  height: 60px;
  margin-right: 30px;
  border-radius: 20px;
  background: #f0faf6;
  color: #27c08a;
}
.signal .icon {
  width: 30px;
  height: 30px;
}
.signal-text {
  margin-right: auto;
}
.signal-text strong, .signal-text small {
  display: block;
  line-height: 20px;
}
.signal-text strong {
  font-size: 15px;
  font-weight: 600;
}
.signal-text small {
  font-size: 13px;
  font-weight: 500;
  color: #9ca3af;
}
.manifest, .relay {
  height: 60px;
  font-size: 13px;
  font-weight: 700;
}
.manifest {
  width: 123px;
  margin-right: 20px;
  border: 1px solid #f1f3f5;
  border-radius: 20px;
  background: #f9fafc;
  color: #4b5563;
}
.relay {
  width: 213px;
  border-radius: 30px;
  background: #111827;
  color: #fff;
  letter-spacing: 1px;
}
.watermark {
  position: absolute;
  left: 4px;
  bottom: 16px;
  display: flex;
  flex-direction: column;
  width: 232px;
  color: rgba(120,120,120,0.22);
  font-weight: 700;
  letter-spacing: normal;
  text-align: center;
  pointer-events: none;
}
.watermark-ar {
  font-family: "DejaVu Sans", sans-serif;
  font-size: 64px;
  line-height: 66px;
}
.watermark-en {
  font-size: 36px;
  line-height: 46px;
}
```
